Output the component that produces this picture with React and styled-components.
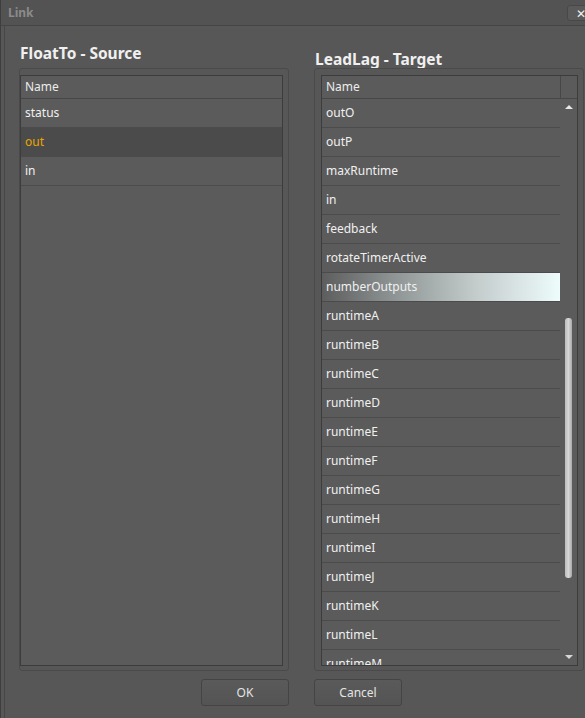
import React from "react";
import styled, { createGlobalStyle } from "styled-components";

const source = ["status", "out", "in"];
const target = [
	"outO",
	"outP",
	"maxRuntime",
	"in",
	"feedback",
	"rotateTimerActive",
	"numberOutputs",
	"runtimeA",
	"runtimeB",
	"runtimeC",
	"runtimeD",
	"runtimeE",
	"runtimeF",
	"runtimeG",
	"runtimeH",
	"runtimeI",
	"runtimeJ",
	"runtimeK",
	"runtimeL",
	"runtimeM",
];

export default function App() {
	return (
		<>
			<GlobalStyle />
			<Window>
				<TitleBar>
					<WindowTitle>Link</WindowTitle>
					<CloseButton>✕</CloseButton>
				</TitleBar>

				<Body>
					<Columns>
						<Column>
							<Heading $drop={18}>FloatTo - Source</Heading>
							<GroupBox $inset={1}>
								<Table>
									<HeaderRow>
										<HeaderCell>Name</HeaderCell>
									</HeaderRow>
									{source.map((name) => (
										<Row key={name} $selected={name === "out"}>
											{name}
										</Row>
									))}
								</Table>
							</GroupBox>
						</Column>

						<Column>
							<Heading $drop={24}>LeadLag - Target</Heading>
							<GroupBox $inset={7} $top={6}>
								<Table>
									<HeaderRow>
										<HeaderCell>Name</HeaderCell>
										<HeaderGutter />
									</HeaderRow>
									<ScrollArea>
										<List>
											{target.map((name) => (
												<Row key={name} $hover={name === "numberOutputs"}>
													{name}
												</Row>
											))}
										</List>
										<ScrollBar>
											<Arrow $down={false} />
											<Thumb />
											<Arrow $down />
										</ScrollBar>
									</ScrollArea>
								</Table>
							</GroupBox>
						</Column>
					</Columns>

					<ButtonRow>
						<Button $align="end">OK</Button>
						<Button $align="start">Cancel</Button>
					</ButtonRow>
				</Body>
			</Window>
		</>
	);
}

const GlobalStyle = createGlobalStyle`
	body {
		margin: 0;
		background: #575757;
		font-family: "Noto Sans", "DejaVu Sans", sans-serif;
	}
`;

const Window = styled.div`
	width: 585px;
	height: 718px;
	overflow: hidden;
	display: flex;
	flex-direction: column;
	background: #575757;
	border-left: 1px solid #3e3e3e;
	box-sizing: border-box;
`;

const TitleBar = styled.div`
	height: 26px;
	flex: none;
	display: flex;
	align-items: center;
	justify-content: space-between;
	background: #535353;
	border-bottom: 1px solid #454545;
	box-sizing: border-box;
	padding-left: 7px;
`;
const WindowTitle = styled.span`
	font-size: 12px;
	font-weight: bold;
	color: #8b8b8b;
`;
const CloseButton = styled.span`
	width: 26px;
	height: 14px;
	margin-right: -10px;
	margin-top: 1px;
	display: flex;
	align-items: center;
	justify-content: center;
	border: 1px solid #484848;
	border-radius: 3px;
	background: #5a5a5a;
	color: #f0f0f0;
	font-size: 12px;
	font-weight: 900;
`;

const Body = styled.div`
	flex: 1;
	margin-left: 3px;
	border-left: 1px solid #474747;
	display: flex;
	flex-direction: column;
`;
const Columns = styled.div`
	display: grid;
	grid-template-columns: 270px 270px;
	column-gap: 25px;
	padding-left: 14px;
`;
const Column = styled.div`
	display: flex;
	flex-direction: column;
`;
const Heading = styled.div`
	height: 42px;
	box-sizing: border-box;
	padding-top: ${(p) => p.$drop}px;
	padding-left: 1px;
	font-size: 15.5px;
	line-height: 19px;
	font-weight: bold;
	color: #f0f0f0;
`;
const GroupBox = styled.div`
	height: 603px;
	box-sizing: border-box;
	border: 1px solid #4a4a4a;
	border-radius: 3px;
	padding: ${(p) => p.$top || 6}px 5px 4px ${(p) => p.$inset - 1}px;
	display: flex;
`;
const Table = styled.div`
	flex: 1;
	display: flex;
	flex-direction: column;
	background: #5b5b5b;
	border: 1px solid #3c3c3c;
	overflow: hidden;
`;
const HeaderRow = styled.div`
	height: 22px;
	flex: none;
	display: flex;
	border-bottom: 1px solid #474747;
`;
const HeaderCell = styled.div`
	flex: 1;
	padding-left: 4px;
	font-size: 12px;
	line-height: 22px;
	color: #ececec;
`;
const HeaderGutter = styled.div`
	width: 16px;
	border-left: 1px solid #474747;
`;
const ScrollArea = styled.div`
	flex: 1;
	display: flex;
	min-height: 0;
`;
const List = styled.div`
	flex: 1;
	overflow: hidden;
`;
const Row = styled.div`
	height: 29px;
	box-sizing: border-box;
	border-bottom: 1px solid #4b4b4b;
	padding-left: 4px;
	font-size: 12px;
	line-height: 28px;
	color: ${(p) => (p.$selected ? "#e8a600" : "#f0f0f0")};
	background: ${(p) =>
		p.$selected
			? "#4b4b4b"
			: p.$hover
			? "linear-gradient(90deg, #5d5d5d 0%, #8e9494 30%, #c4cccc 65%, #eefcfc 100%)"
			: "transparent"};
`;
const ScrollBar = styled.div`
	width: 17px;
	display: flex;
	flex-direction: column;
	align-items: center;
	padding: 6px 0 6px;
	box-sizing: border-box;
`;
const Arrow = styled.div`
	width: 0;
	height: 0;
	border-left: 4px solid transparent;
	border-right: 4px solid transparent;
	${(p) =>
		p.$down
			? "border-top: 4px solid #d8d8d8; margin-top: auto;"
			: "border-bottom: 4px solid #e8e8e8;"}
`;
const Thumb = styled.div`
	width: 7px;
	height: 260px;
	margin-top: 209px;
	border-radius: 3px;
	background: linear-gradient(90deg, #bdbdbd, #d6d6d6 50%, #a9a9a9);
`;

const ButtonRow = styled.div`
	display: grid;
	grid-template-columns: 270px 270px;
	column-gap: 25px;
	padding: 8px 0 0 14px;
`;
const Button = styled.div`
	justify-self: ${(p) => p.$align};
	width: 88px;
	height: 27px;
	box-sizing: border-box;
	border: 1px solid #444;
	border-radius: 3px;
	background: linear-gradient(#5a5a5a, #545454);
	color: #e4e4e4;
	font-size: 12px;
	display: flex;
	align-items: center;
	justify-content: center;
`;
